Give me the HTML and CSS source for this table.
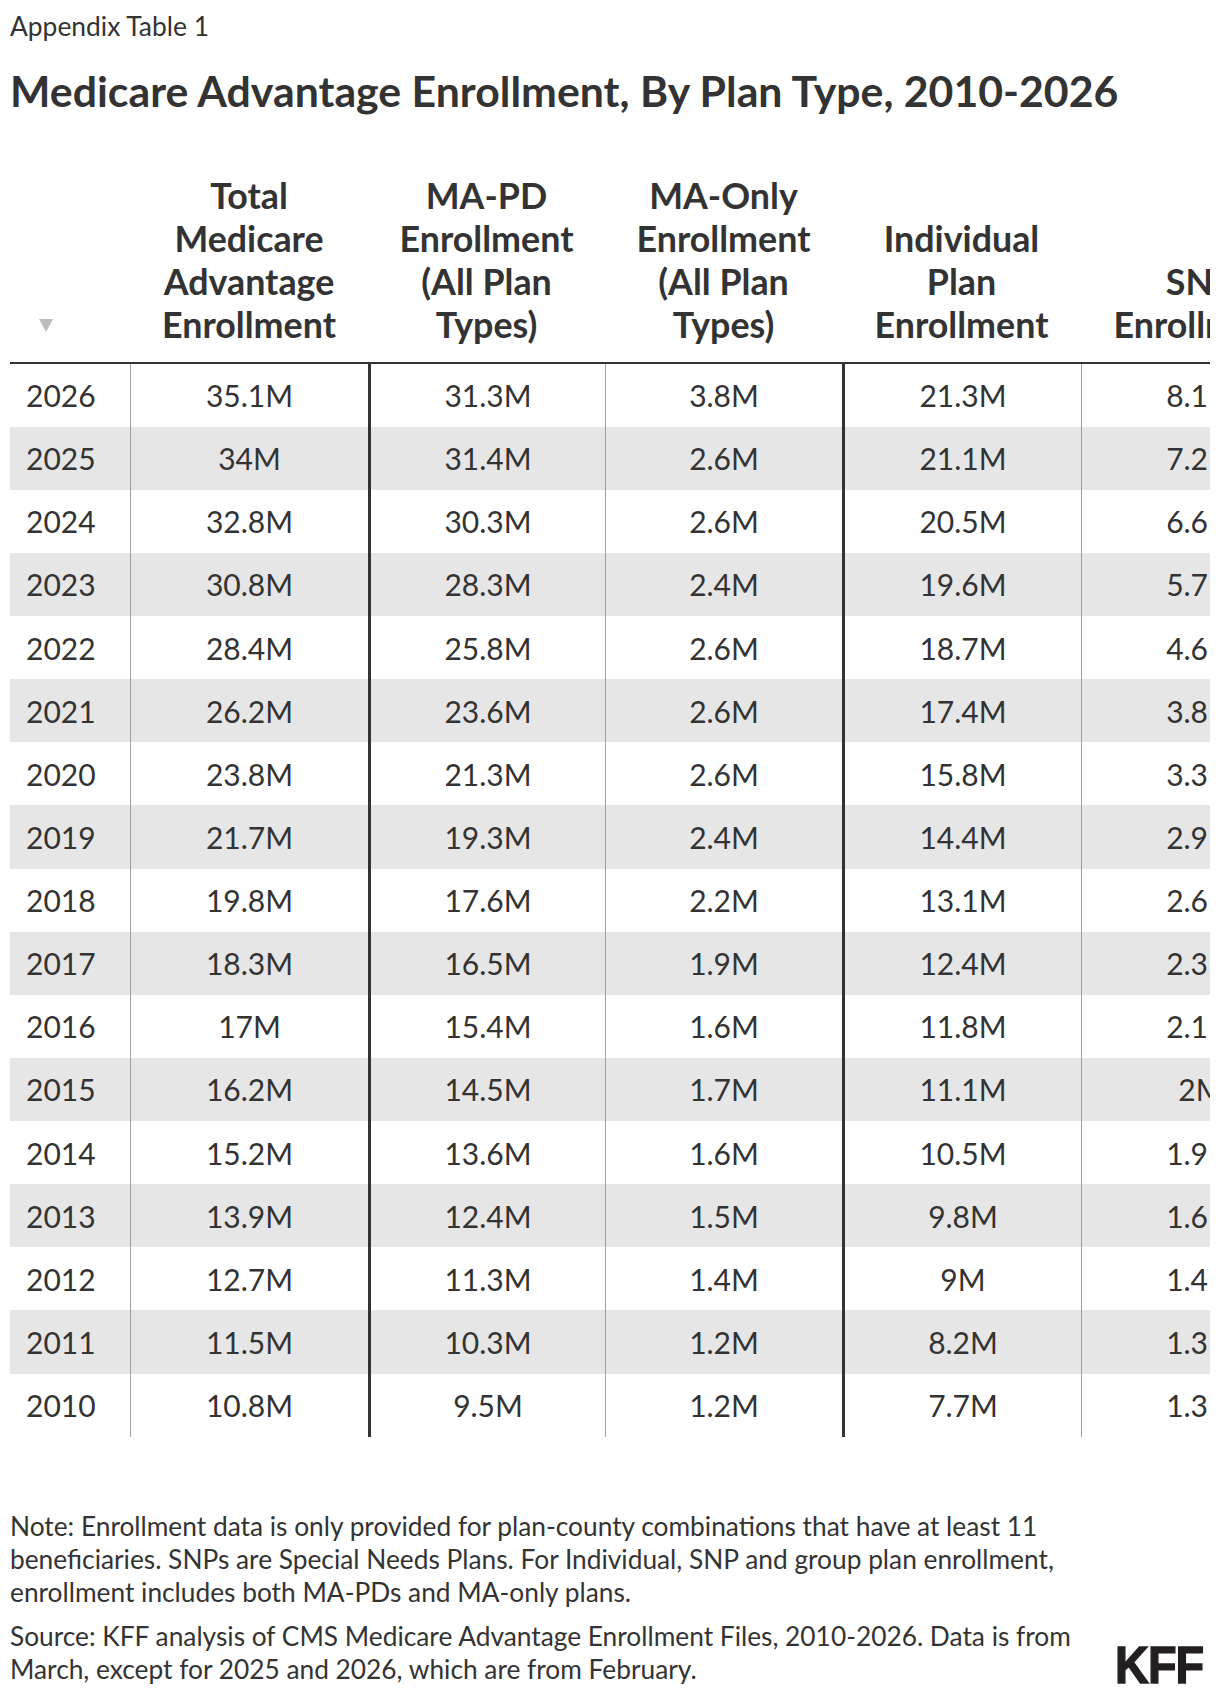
FILE: index.html
```html
<!DOCTYPE html>
<html lang="en">
<head>
<meta charset="utf-8">
<title>Medicare Advantage Enrollment, By Plan Type, 2010-2026</title>
<link rel="stylesheet" href="styles.css">
</head>
<body>
<div class="page">
  <p class="eyebrow">Appendix Table 1</p>
  <h1 class="title">Medicare Advantage Enrollment, By Plan Type, 2010-2026</h1>
  <div class="table-wrap">
    <table class="data">
      <thead>
        <tr>
          <th class="c0"><svg class="sort" width="14" height="13" viewBox="0 0 14 13"><polygon points="0,0 14,0 7,13" fill="#bdbdbd"/></svg></th>
          <th class="c1">Total<br>Medicare<br>Advantage<br>Enrollment</th>
          <th class="c2">MA-PD<br>Enrollment<br>(All Plan<br>Types)</th>
          <th class="c3">MA-Only<br>Enrollment<br>(All Plan<br>Types)</th>
          <th class="c4">Individual<br>Plan<br>Enrollment</th>
          <th class="c5">SNP<br>Enrollment</th>
        </tr>
      </thead>
      <tbody>
        <tr><td class="year">2026</td><td class="thin">35.1M</td><td class="thick">31.3M</td><td class="thin">3.8M</td><td class="thick">21.3M</td><td class="thin">8.1M</td></tr>
        <tr class="alt"><td class="year">2025</td><td class="thin">34M</td><td class="thick">31.4M</td><td class="thin">2.6M</td><td class="thick">21.1M</td><td class="thin">7.2M</td></tr>
        <tr><td class="year">2024</td><td class="thin">32.8M</td><td class="thick">30.3M</td><td class="thin">2.6M</td><td class="thick">20.5M</td><td class="thin">6.6M</td></tr>
        <tr class="alt"><td class="year">2023</td><td class="thin">30.8M</td><td class="thick">28.3M</td><td class="thin">2.4M</td><td class="thick">19.6M</td><td class="thin">5.7M</td></tr>
        <tr><td class="year">2022</td><td class="thin">28.4M</td><td class="thick">25.8M</td><td class="thin">2.6M</td><td class="thick">18.7M</td><td class="thin">4.6M</td></tr>
        <tr class="alt"><td class="year">2021</td><td class="thin">26.2M</td><td class="thick">23.6M</td><td class="thin">2.6M</td><td class="thick">17.4M</td><td class="thin">3.8M</td></tr>
        <tr><td class="year">2020</td><td class="thin">23.8M</td><td class="thick">21.3M</td><td class="thin">2.6M</td><td class="thick">15.8M</td><td class="thin">3.3M</td></tr>
        <tr class="alt"><td class="year">2019</td><td class="thin">21.7M</td><td class="thick">19.3M</td><td class="thin">2.4M</td><td class="thick">14.4M</td><td class="thin">2.9M</td></tr>
        <tr><td class="year">2018</td><td class="thin">19.8M</td><td class="thick">17.6M</td><td class="thin">2.2M</td><td class="thick">13.1M</td><td class="thin">2.6M</td></tr>
        <tr class="alt"><td class="year">2017</td><td class="thin">18.3M</td><td class="thick">16.5M</td><td class="thin">1.9M</td><td class="thick">12.4M</td><td class="thin">2.3M</td></tr>
        <tr><td class="year">2016</td><td class="thin">17M</td><td class="thick">15.4M</td><td class="thin">1.6M</td><td class="thick">11.8M</td><td class="thin">2.1M</td></tr>
        <tr class="alt"><td class="year">2015</td><td class="thin">16.2M</td><td class="thick">14.5M</td><td class="thin">1.7M</td><td class="thick">11.1M</td><td class="thin">2M</td></tr>
        <tr><td class="year">2014</td><td class="thin">15.2M</td><td class="thick">13.6M</td><td class="thin">1.6M</td><td class="thick">10.5M</td><td class="thin">1.9M</td></tr>
        <tr class="alt"><td class="year">2013</td><td class="thin">13.9M</td><td class="thick">12.4M</td><td class="thin">1.5M</td><td class="thick">9.8M</td><td class="thin">1.6M</td></tr>
        <tr><td class="year">2012</td><td class="thin">12.7M</td><td class="thick">11.3M</td><td class="thin">1.4M</td><td class="thick">9M</td><td class="thin">1.4M</td></tr>
        <tr class="alt"><td class="year">2011</td><td class="thin">11.5M</td><td class="thick">10.3M</td><td class="thin">1.2M</td><td class="thick">8.2M</td><td class="thin">1.3M</td></tr>
        <tr><td class="year">2010</td><td class="thin">10.8M</td><td class="thick">9.5M</td><td class="thin">1.2M</td><td class="thick">7.7M</td><td class="thin">1.3M</td></tr>
      </tbody>
    </table>
  </div>
  <div class="footer">
    <div class="notes">
      <p class="note">Note: Enrollment data is only provided for plan-county combinations that have at least 11 beneficiaries. SNPs are Special Needs Plans. For Individual, SNP and group plan enrollment, enrollment includes both MA-PDs and MA-only plans.</p>
      <p class="note source">Source: KFF analysis of CMS Medicare Advantage Enrollment Files, 2010-2026. Data is from March, except for 2025 and 2026, which are from February.</p>
    </div>
    <div class="logo"><span class="logo-text">KFF</span></div>
  </div>
</div>
</body>
</html>
```

FILE: styles.css
```css
* { box-sizing: border-box; }

body {
  margin: 0;
  background: #ffffff;
  color: #333333;
  font-family: "Lato", "Open Sans", "Noto Sans", sans-serif;
}

.page {
  padding: 0 10px;
}

.eyebrow {
  margin: 0;
  padding-top: 11px;
  font-size: 26.4px;
  line-height: 30px;
  font-weight: 400;
  color: #333333;
}

.title {
  margin: 26px 0 0;
  font-size: 42.8px;
  line-height: 48px;
  font-weight: 700;
  color: #333333;
}

.table-wrap {
  margin-top: 58.5px;
  width: 1200px;
  overflow: hidden;
}

.data {
  table-layout: fixed;
  border-collapse: separate;
  border-spacing: 0;
  width: 1310px;
}

.data th {
  vertical-align: bottom;
  text-align: center;
  font-size: 35.8px;
  line-height: 43px;
  font-weight: 700;
  color: #333333;
  padding: 0 0 16px;
  border-bottom: 2px solid #333333;
}

.data th.c0 { width: 120px; text-align: left; padding-left: 29px; }
.data th.c1 { width: 238px; }
.data th.c2 { width: 237px; }
.data th.c3 { width: 237px; }
.data th.c4 { width: 239px; }
.data th.c5 { width: 239px; }

.sort {
  display: block;
  margin-bottom: 14px;
}

.data tbody tr {
  height: 63.125px;
}

.data tbody tr.alt td {
  background: #e6e6e6;
}

.data td {
  padding: 0;
  text-align: center;
  vertical-align: middle;
  font-size: 30px;
  font-weight: 400;
  color: #333333;
}

.data td.year {
  text-align: left;
  padding-left: 16px;
}

.data td.thin {
  border-left: 1px solid #9e9e9e;
}

.data td.thick {
  border-left: 3px solid #333333;
}

.footer {
  margin-top: 73px;
  display: flex;
  align-items: flex-end;
  justify-content: space-between;
}

.notes {
  width: 1085px;
}

.note {
  margin: 0;
  font-size: 26.3px;
  line-height: 33px;
  color: #333333;
}

.note.source {
  margin-top: 11px;
}

.logo {
  width: 92px;
  height: 37px;
  margin-bottom: 2px;
  margin-right: 3px;
}

.logo-text {
  display: block;
  font-family: "Liberation Sans", Arial, sans-serif;
  font-weight: 700;
  font-size: 52px;
  line-height: 37px;
  color: #231f20;
  -webkit-text-stroke: 1.5px #231f20;
  transform: scaleX(0.9);
  transform-origin: left center;
  letter-spacing: -1px;
  white-space: nowrap;
}
```
